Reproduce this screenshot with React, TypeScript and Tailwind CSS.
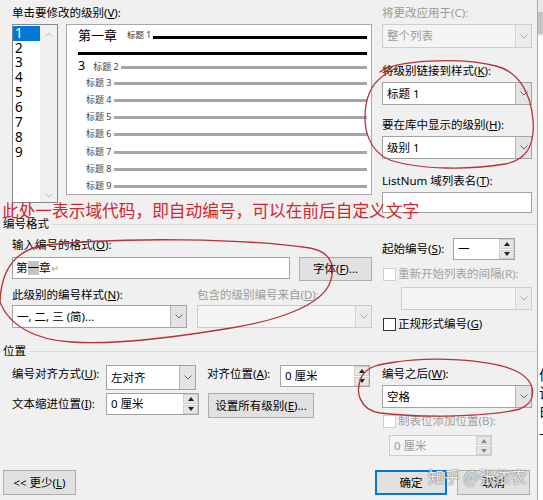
import React from "react"

const font = "font-['Noto_Sans','Noto_Sans_CJK_SC',sans-serif]"

function Chevron({ color = "#606060", up = false }: { color?: string; up?: boolean }) {
  return (
    <svg width="8" height="5" viewBox="0 0 8 5" fill="none">
      <path d={up ? "M0.5 4.5L4 1L7.5 4.5" : "M0.5 0.5L4 4L7.5 0.5"} stroke={color} strokeWidth="1" />
    </svg>
  )
}

function Combo({ text, className = "", disabled = false }: { text?: string; className?: string; disabled?: boolean }) {
  return (
    <div
      className={`flex border ${
        disabled ? "border-[#cccccc] bg-[#f4f4f4] text-[#9a9a9a]" : "border-[#a3a3a3] bg-white text-black"
      } ${className}`}
    >
      <div className="flex-1 flex items-center pl-[4px] text-[11.5px] leading-none whitespace-nowrap overflow-hidden">
        {text}
      </div>
      <div
        className={`w-[16px] flex items-center justify-center border-l ${
          disabled ? "border-[#d4d4d4] bg-[#ececec]" : "border-[#b4b4b4] bg-[#e3e3e3]"
        }`}
      >
        <Chevron color={disabled ? "#a8a8a8" : "#666666"} />
      </div>
    </div>
  )
}

function Tri({ up, color }: { up?: boolean; color: string }) {
  return (
    <svg width="6" height="4" viewBox="0 0 6 4">
      <path d={up ? "M0 4L3 0L6 4Z" : "M0 0L6 0L3 4Z"} fill={color} />
    </svg>
  )
}

function Spin({ text, className = "", disabled = false }: { text: string; className?: string; disabled?: boolean }) {
  const c = disabled ? "#8a8a8a" : "#202020"
  return (
    <div
      className={`flex border ${
        disabled ? "border-[#cccccc] bg-[#f4f4f4] text-[#9a9a9a]" : "border-[#a3a3a3] bg-white text-black"
      } ${className}`}
    >
      <div className="flex-1 flex items-center pl-[4px] text-[11.5px] leading-none whitespace-nowrap">{text}</div>
      <div className="w-[15px] flex flex-col gap-[1px] bg-white">
        <div className="flex-1 flex items-center justify-center bg-[#e6e6e6] border border-[#cfcfcf]">
          <Tri up color={c} />
        </div>
        <div className="flex-1 flex items-center justify-center bg-[#e6e6e6] border border-[#cfcfcf]">
          <Tri color={c} />
        </div>
      </div>
    </div>
  )
}

function Check({ disabled = false }: { disabled?: boolean }) {
  return (
    <div
      className={`w-[13px] h-[13px] border ${
        disabled ? "border-[#cfcfcf] bg-white" : "border-[#333333] bg-white"
      }`}
    />
  )
}

function Button({ children, className = "" }: { children: React.ReactNode; className?: string }) {
  return (
    <div
      className={`flex items-center justify-center bg-[#e1e1e1] text-[11.5px] leading-none whitespace-nowrap ${className}`}
    >
      {children}
    </div>
  )
}

function ListBox() {
  const items = ["1", "2", "3", "4", "5", "6", "7", "8", "9"]
  return (
    <div className="w-[46px] h-[179px] bg-white border border-[#828790] flex">
      <div className="w-[27px] flex flex-col pt-[1px]">
        {items.map((n, i) => (
          <div
            key={n}
            className={`h-[14.9px] flex items-center pl-[2px] text-[13.5px] leading-none ${
              i === 0 ? "bg-[#0078d7] text-white" : "text-black"
            }`}
          >
            {n}
          </div>
        ))}
      </div>
      <div className="flex-1 bg-[#f0f0f0] flex flex-col items-center justify-between pt-[7px] pb-[4px]">
        <Chevron up color="#bdbdbd" />
        <Chevron color="#bdbdbd" />
      </div>
    </div>
  )
}

function Preview() {
  const levels = ["3", "4", "5", "6", "7", "8", "9"]
  return (
    <div className="w-[306px] h-[171px] bg-white border border-[#a8a8a8] flex flex-col pl-[11px] pr-[4px] overflow-hidden">
      <div className="h-[24px] flex items-center">
        <span className="text-[13px] leading-none">第一章</span>
        <span className="ml-[10px] text-[8.5px] leading-none text-[#333333] whitespace-nowrap">标题 1</span>
        <div className="flex-1 ml-[2px] mt-[3px] h-[3px] bg-black" />
      </div>
      <div className="mt-[6px] h-[3px] bg-black" />
      <div className="mt-[4px] h-[17px] flex items-center">
        <span className="text-[12.5px] leading-none">3</span>
        <span className="ml-[8px] text-[9px] leading-none text-[#444444] whitespace-nowrap">标题 2</span>
        <div className="flex-1 ml-[2px] mt-[2px] h-[3px] bg-[#a6a6a6]" />
      </div>
      {levels.map((n) => (
        <div key={n} className="h-[17.2px] flex items-center pl-[8px] shrink-0">
          <span className="text-[9px] leading-none text-[#444444] whitespace-nowrap">标题 {n}</span>
          <div className="flex-1 ml-[2px] mt-[2px] h-[3px] bg-[#a6a6a6]" />
        </div>
      ))}
    </div>
  )
}

function Header({ text }: { text: string }) {
  return (
    <div className="h-[22px] flex items-center pl-[3px]">
      <span className="text-[11.5px] leading-none">{text}</span>
      <div className="flex-1 ml-[4px] h-px bg-[#dcdcdc]" />
    </div>
  )
}

function Annotations() {
  return (
    <div className="absolute inset-0 pointer-events-none">
      <svg width="543" height="500" viewBox="0 0 543 500" fill="none">
        <g stroke="#b8303a" strokeWidth="1.3" strokeLinecap="round">
          <path d="M380 72 C395 60 460 57 496 66 C520 72 531 95 533 120 C535 145 527 160 505 164 C470 170 420 170 390 160 C370 152 362 130 366 105 C369 88 376 78 396 68" />
          <path d="M0 302 C1 272 14 252 40 246 C120 236 250 239 310 248 C331 252 337 266 329 285 C319 305 281 320 231 328 C171 338 111 345 71 342 C36 340 9 326 0 302" />
          <path d="M390 363 C430 356 490 359 516 371 C538 382 537 402 520 409 C490 417 420 418 380 413 C360 410 354 392 362 376 C368 366 380 364 396 362" />
        </g>
      </svg>
      <div className="absolute left-[2px] top-[200px] text-[16.7px] leading-[20px] text-[#d3252f] whitespace-nowrap font-['Noto_Sans_CJK_SC',sans-serif]">
        此处一表示域代码，即自动编号，可以在前后自定义文字
      </div>
      <div className="absolute left-[428px] top-[466px] text-[16px] leading-[20px] text-white/90 whitespace-nowrap [text-shadow:0_0_1px_#4a4a4a,0_0_2px_#8a8a8a] font-['Noto_Sans_CJK_SC',sans-serif]">
        知乎 @张依农
      </div>
    </div>
  )
}

export default function App() {
  return (
    <div className={`${font} relative flex w-[543px] h-[500px] overflow-hidden bg-[#f0f0f0] text-black text-[11.5px]`}>
      <div className="w-[538px] h-full flex flex-col border-r border-[#a8a8a8]">
        {/* levels + preview */}
        <div className="flex h-[213px] pl-[12px]">
          <div className="w-[360px] flex flex-col">
            <div className="h-[24px] flex items-center pt-[2px] leading-none">
              单击要修改的级别(<u>V</u>):
            </div>
            <div className="flex gap-[8px]">
              <ListBox />
              <Preview />
            </div>
          </div>
          <div className="ml-[10px] w-[150px] flex flex-col">
            <div className="h-[24px] flex items-center pt-[2px] leading-none text-[#9a9a9a]">将更改应用于(C):</div>
            <Combo disabled className="h-[24px]" text="整个列表" />
            <div className="mt-[12px] h-[22px] flex items-center leading-none">
              将级别链接到样式(<u>K</u>):
            </div>
            <Combo className="h-[23px]" text="标题 1" />
            <div className="mt-[9px] h-[22px] flex items-center leading-none">
              要在库中显示的级别(<u>H</u>):
            </div>
            <Combo className="h-[23px]" text="级别 1" />
            <div className="mt-[11px] h-[22px] flex items-center leading-none">
              ListNum 域列表名(<u>T</u>):
            </div>
            <div className="h-[21px] bg-white border border-[#a3a3a3]" />
          </div>
        </div>

        <Header text="编号格式" />

        {/* number format */}
        <div className="flex h-[105px] pl-[12px]">
          <div className="w-[360px] flex flex-col">
            <div className="mt-[1px] h-[18px] flex items-center leading-none">
              输入编号的格式(<u>O</u>):
            </div>
            <div className="mt-[3px] flex items-start">
              <div className="w-[278px] h-[22px] bg-white border border-[#a3a3a3] flex items-center pl-[3px] leading-none">
                <span>第</span>
                <span className="bg-[#c3c3c3] py-[1px]">一</span>
                <span>章</span>
                <span className="text-[10px] text-[#a0a0a0]">↵</span>
              </div>
              <Button className="ml-[9px] w-[73px] h-[24px] border border-[#adadad]">
                字体(<u>F</u>)...
              </Button>
            </div>
            <div className="mt-[5px] h-[18px] flex items-center leading-none">
              <span className="w-[185px]">
                此级别的编号样式(<u>N</u>):
              </span>
              <span className="text-[#9a9a9a]">
                包含的级别编号来自(<u>D</u>):
              </span>
            </div>
            <div className="mt-[1px] flex gap-[10px]">
              <Combo className="w-[175px] h-[23px]" text="一, 二, 三 (简)..." />
              <Combo disabled className="w-[175px] h-[23px]" />
            </div>
          </div>
          <div className="ml-[10px] w-[150px] flex flex-col">
            <div className="mt-[3px] h-[22px] flex items-center">
              <span className="w-[71px] leading-none">
                起始编号(<u>S</u>):
              </span>
              <Spin className="w-[62px] h-[22px]" text="一" />
            </div>
            <div className="mt-[5px] h-[18px] flex items-center">
              <div className="ml-[1px]">
                <Check disabled />
              </div>
              <span className="ml-[2px] leading-none text-[#a0a0a0] whitespace-nowrap">重新开始列表的间隔(R):</span>
            </div>
            <Combo disabled className="mt-[4px] ml-[19px] w-[131px] h-[23px]" />
            <div className="mt-[6px] h-[16px] flex items-center">
              <div className="ml-[1px]">
                <Check />
              </div>
              <span className="ml-[2px] leading-none">
                正规形式编号(<u>G</u>)
              </span>
            </div>
          </div>
        </div>

        <Header text="位置" />

        {/* position */}
        <div className="flex h-[106px] pl-[12px]">
          <div className="w-[360px] flex flex-col">
            <div className="mt-[3px] flex items-start">
              <span className="w-[94px] h-[18px] flex items-center leading-none">
                编号对齐方式(<u>U</u>):
              </span>
              <Combo className="w-[90px] h-[25px]" text="左对齐" />
              <span className="ml-[11px] w-[73px] h-[18px] flex items-center leading-none">
                对齐位置(<u>A</u>):
              </span>
              <Spin className="w-[90px] h-[22px]" text="0 厘米" />
            </div>
            <div className="mt-[3px] flex items-start">
              <span className="w-[94px] h-[22px] flex items-center leading-none">
                文本缩进位置(<u>I</u>):
              </span>
              <Spin className="w-[93px] h-[22px]" text="0 厘米" />
              <Button className="ml-[9px] w-[106px] h-[25px] border border-[#adadad]">
                设置所有级别(<u>E</u>)...
              </Button>
            </div>
          </div>
          <div className="ml-[10px] w-[150px] flex flex-col">
            <div className="mt-[3px] h-[18px] flex items-center leading-none">
              编号之后(<u>W</u>):
            </div>
            <Combo className="mt-[2px] h-[23px]" text="空格" />
            <div className="mt-[6px] h-[14px] flex items-center">
              <div className="ml-[1px]">
                <Check disabled />
              </div>
              <span className="ml-[2px] leading-none text-[#a0a0a0] whitespace-nowrap">制表位添加位置(B):</span>
            </div>
            <Spin disabled className="mt-[7px] ml-[7px] w-[103px] h-[21px]" text="0 厘米" />
          </div>
        </div>

        {/* buttons */}
        <div className="mt-[2px] flex pl-[3px] pr-[7px]">
          <Button className="w-[73px] h-[25px] border border-[#adadad]">
            {"<< "}更少(<u>L</u>)
          </Button>
          <Button className="ml-auto w-[72px] h-[25px] border-2 border-[#0078d7]">确定</Button>
          <Button className="ml-[10px] w-[73px] h-[25px] border border-[#adadad]">取消</Button>
        </div>
      </div>

      {/* document behind the dialog */}
      <div className="w-[5px] h-full bg-white flex flex-col overflow-hidden">
        <div className="h-[36px] bg-[#e8e8e8] pt-[12px]">
          <div className="h-[22px] bg-[#c4c4c4]" />
        </div>
        <div className="mt-[329px] flex flex-col text-[14px] leading-[18px] whitespace-nowrap font-['Noto_Sans_CJK_SC',sans-serif]">
          <span className="ml-[1px]">信</span>
          <span className="ml-[1px]">试</span>
          <span className="ml-[1px]">白</span>
          <span className="ml-[1px]">上</span>
        </div>
      </div>

      <Annotations />
    </div>
  )
}
